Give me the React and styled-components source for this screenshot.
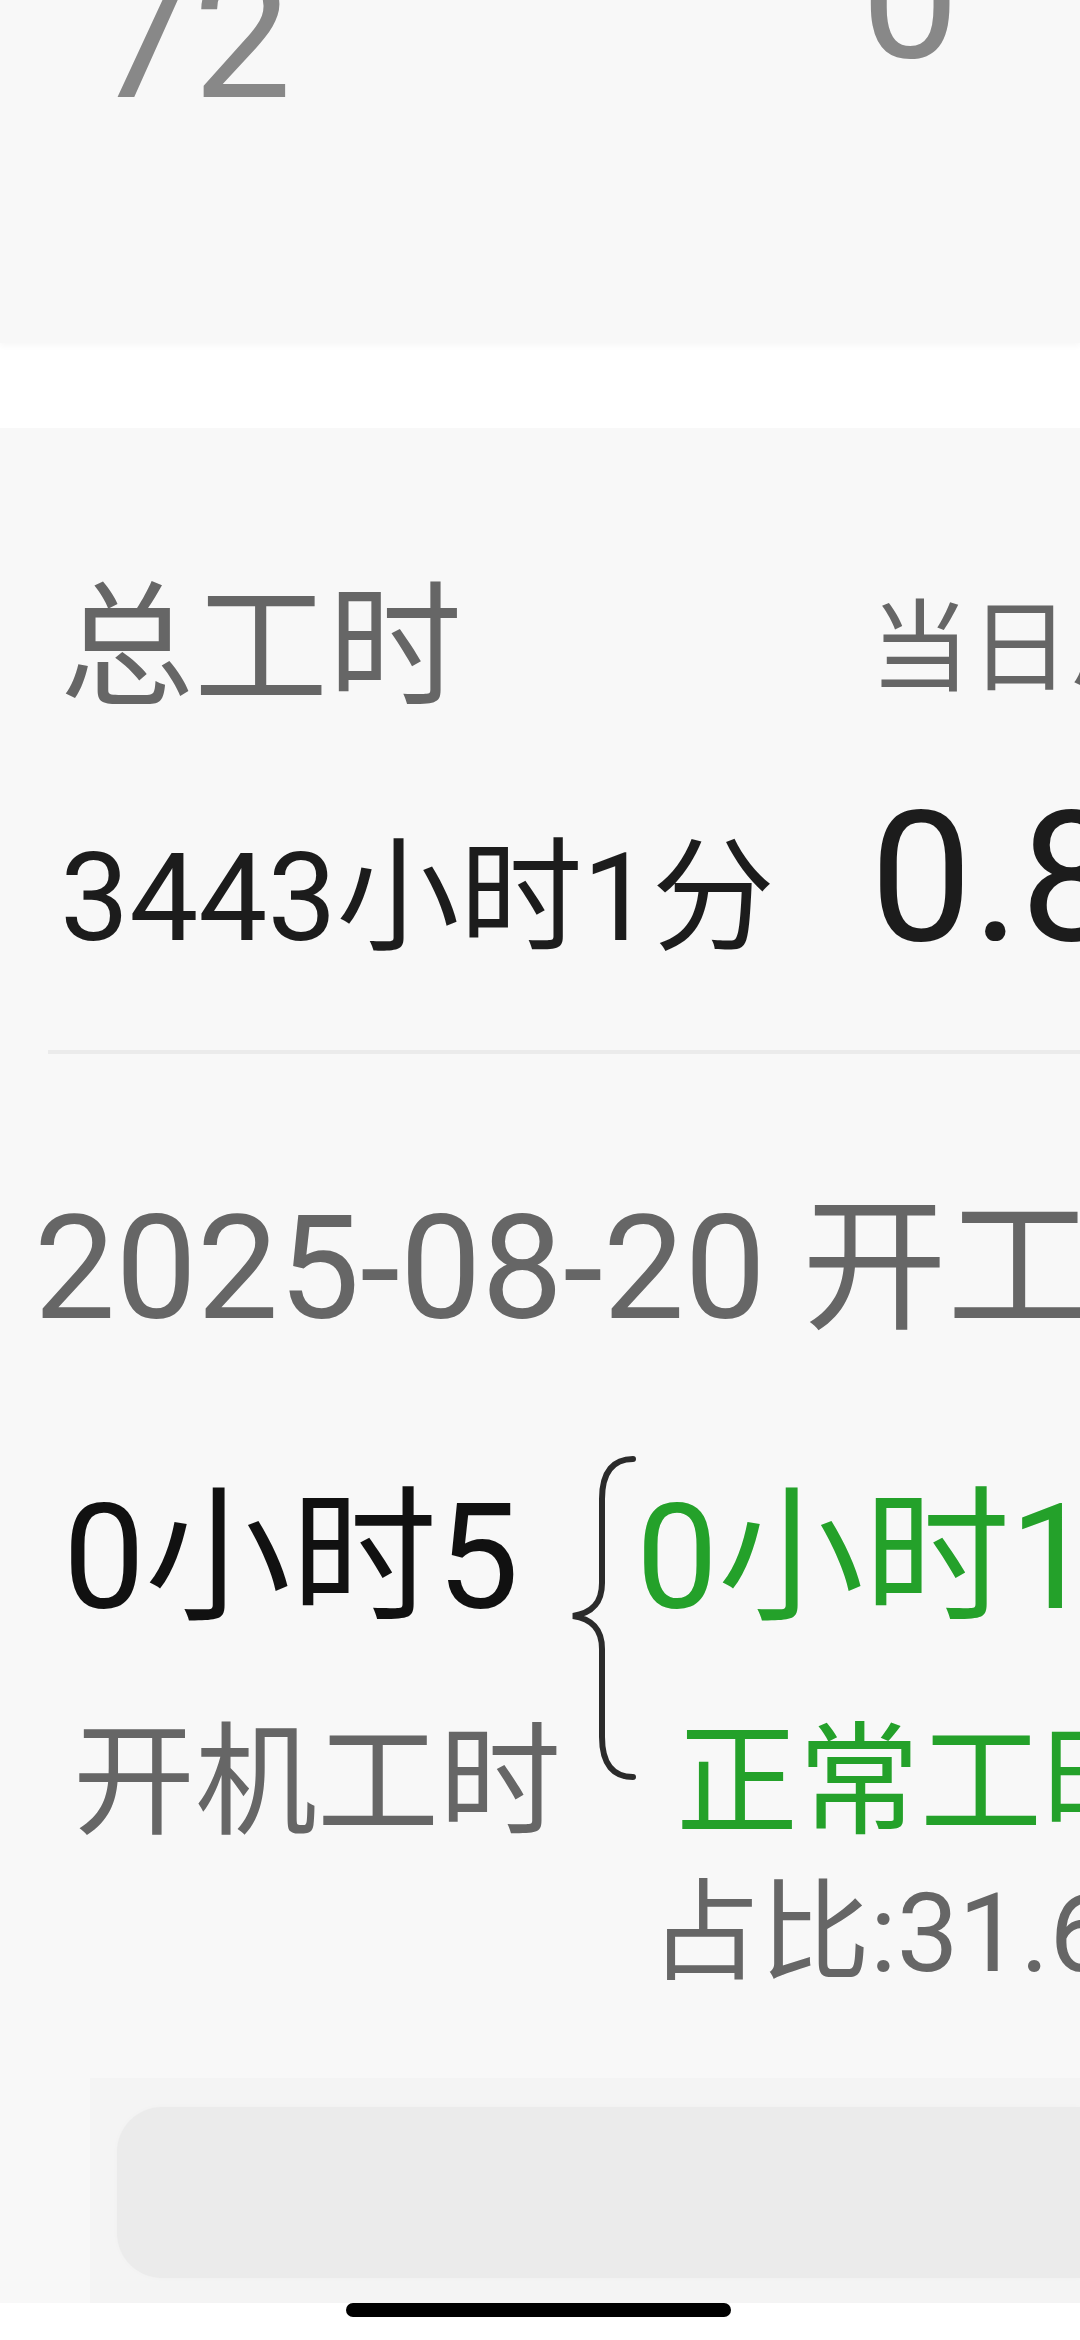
import React from 'react';
import styled, { createGlobalStyle } from 'styled-components';

const GlobalStyle = createGlobalStyle`
  html, body {
    margin: 0;
    padding: 0;
    background: #ffffff;
  }
  body {
    font-family: Roboto, "Noto Sans CJK SC", sans-serif;
    -webkit-font-smoothing: antialiased;
  }
`;

const Screen = styled.div`
  position: relative;
  width: 1080px;
  height: 2340px;
  overflow: hidden;
  background: #ffffff;
  display: flex;
  flex-direction: column;
`;

const TopCard = styled.section`
  flex: none;
  height: 343px;
  display: flex;
  flex-direction: column;
  background: #f8f8f8;
  box-shadow: 0 3px 6px rgba(0, 0, 0, 0.03);
`;

const StatRow = styled.div`
  display: flex;
  align-items: flex-start;
  margin-top: -50px;
  padding-left: 95px;
`;

const BigStat = styled.div`
  width: ${(p) => p.$width}px;
  margin-top: ${(p) => -(p.$lift || 0)}px;
  font-size: 175px;
  line-height: 1;
  color: #888888;
  white-space: nowrap;
`;

const MainCard = styled.section`
  flex: none;
  margin-top: 85px;
  padding-top: 154px;
  display: flex;
  flex-direction: column;
  background: #f8f8f8;
`;

const SummaryGrid = styled.div`
  display: grid;
  grid-template-columns: 810px 1fr;
  row-gap: 71px;
  padding-left: 60px;
`;

const SummaryLabel = styled.div`
  align-self: center;
  font-size: ${(p) => p.$size}px;
  line-height: 1;
  color: #666666;
  white-space: nowrap;
`;

const SummaryValue = styled.div`
  align-self: baseline;
  font-size: ${(p) => p.$size}px;
  line-height: 1;
  color: #1c1c1c;
  white-space: nowrap;
`;

const Divider = styled.div`
  height: 4px;
  margin: 81px 0 0 48px;
  background: #ebebeb;
`;

const DateTitle = styled.h2`
  margin: 142px 0 0 34px;
  font-size: 145px;
  font-weight: 400;
  line-height: 1;
  color: #666666;
  white-space: nowrap;
`;

const Breakdown = styled.div`
  display: flex;
  align-items: flex-start;
  margin-top: 114px;
`;

const Column = styled.div`
  flex: none;
  display: flex;
  flex-direction: column;
  width: ${(p) => (p.$width ? `${p.$width}px` : 'auto')};
  margin-top: 31px;
  padding-left: ${(p) => p.$pad}px;
  box-sizing: border-box;
`;

const ValueLine = styled.div`
  font-size: 146px;
  line-height: 1;
  color: ${(p) => p.$color};
  white-space: nowrap;
`;

const SubLine = styled.div`
  margin-top: ${(p) => p.$gap}px;
  padding-left: ${(p) => p.$indent}px;
  font-size: ${(p) => p.$size}px;
  line-height: 1;
  color: ${(p) => p.$color};
  white-space: nowrap;
`;

const BraceMark = styled.svg`
  flex: none;
  display: block;
`;

const BottomPanel = styled.div`
  margin: 89px 0 0 90px;
  padding: 29px 0 25px 27px;
  background: #f4f4f4;
`;

const InputBox = styled.div`
  height: 171px;
  border-radius: 45px 0 0 45px;
  background: #ebebeb;
  box-shadow: 0 0 6px rgba(0, 0, 0, 0.02);
`;

const HomeIndicator = styled.div`
  position: absolute;
  left: 346px;
  top: 2303px;
  width: 385px;
  height: 14px;
  border-radius: 7px;
  background: #000000;
`;

const GREEN = '#24a12a';
const GRAY = '#666666';

function Brace() {
  return (
    <BraceMark width="66" height="326" viewBox="0 0 66 326">
      <path
        d="M63,4 C44,4 32,16 32,44 L32,128 C32,148 22,158 3,161 C22,164 32,174 32,194 L32,282 C32,310 44,322 63,322"
        fill="none"
        stroke="#2b2b2b"
        strokeWidth="6"
        strokeLinecap="round"
      />
    </BraceMark>
  );
}

export default function App() {
  return (
    <>
      <GlobalStyle />
      <Screen>
        <TopCard>
          <StatRow>
            <BigStat $width={766}>72</BigStat>
            <BigStat $width={200} $lift={40}>0</BigStat>
          </StatRow>
        </TopCard>

        <MainCard>
          <SummaryGrid>
            <SummaryLabel $size={134}>总工时</SummaryLabel>
            <SummaryLabel $size={100}>当日总工时</SummaryLabel>
            <SummaryValue $size={123}>3443小时1分</SummaryValue>
            <SummaryValue $size={182}>0.8</SummaryValue>
          </SummaryGrid>

          <Divider />

          <DateTitle>2025-08-20 开工时长</DateTitle>

          <Breakdown>
            <Column $width={570} $pad={63}>
              <ValueLine $color="#111111">0小时5</ValueLine>
              <SubLine $gap={90} $indent={10} $size={122} $color={GRAY}>
                开机工时
              </SubLine>
            </Column>
            <Brace />
            <Column $pad={0}>
              <ValueLine $color={GREEN}>0小时16分</ValueLine>
              <SubLine $gap={90} $indent={40} $size={122} $color={GREEN}>
                正常工时
              </SubLine>
              <SubLine $gap={35} $indent={14} $size={110} $color={GRAY}>
                占比:31.6%
              </SubLine>
            </Column>
          </Breakdown>

          <BottomPanel>
            <InputBox />
          </BottomPanel>
        </MainCard>

        <HomeIndicator />
      </Screen>
    </>
  );
}
